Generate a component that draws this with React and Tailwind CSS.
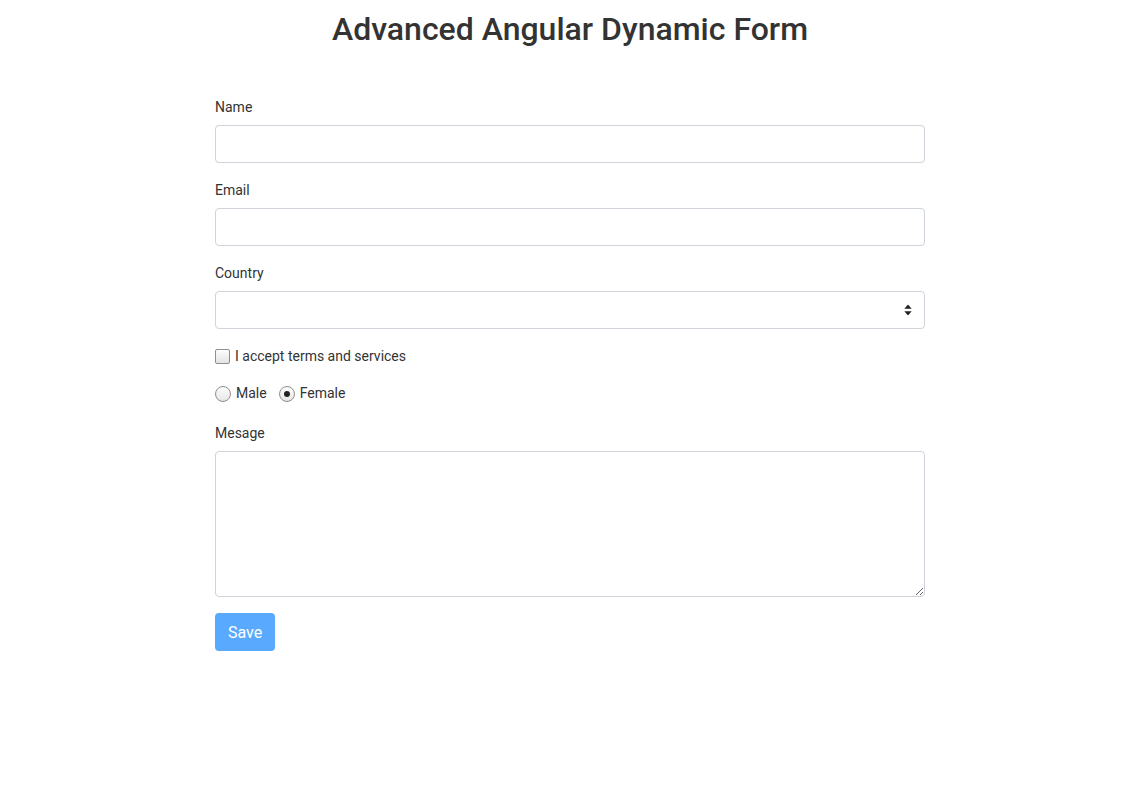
import { useState } from 'react'

const inputCls =
  'block w-full h-[38px] rounded-[4px] border border-[#ced4da] bg-white px-3 text-base text-[#495057] outline-none'

function Field({ label, children }) {
  return (
    <div className="mb-4">
      <label className="mb-[7px] block pt-[1px] text-sm leading-[21px]">{label}</label>
      {children}
    </div>
  )
}

function Radio({ checked, onChange, children }) {
  return (
    <label className="flex items-center">
      <span
        onClick={onChange}
        className="mr-[5px] flex h-[16px] w-[16px] items-center justify-center rounded-full border border-[#8f8f8f] bg-gradient-to-b from-[#fdfdfd] to-[#e6e6e6]"
      >
        {checked && <span className="h-[6px] w-[6px] rounded-full bg-[#222]" />}
      </span>
      {children}
    </label>
  )
}

export default function App() {
  const [gender, setGender] = useState('female')
  const [accepted, setAccepted] = useState(false)

  return (
    <div className="min-h-screen bg-white text-[#333] font-['Roboto',sans-serif]">
      <h2 className="mt-[10px] text-center text-[32px] font-medium leading-[38.4px]">
        Advanced Angular Dynamic Form
      </h2>

      <form className="mx-auto mt-[48px] w-[710px]" onSubmit={(e) => e.preventDefault()}>
        <Field label="Name">
          <input type="text" className={inputCls} />
        </Field>

        <Field label="Email">
          <input type="email" className={inputCls} />
        </Field>

        <Field label="Country">
          <div className="relative">
            <select className={`${inputCls} appearance-none`} defaultValue="">
              <option value="" />
            </select>
            <svg
              viewBox="0 0 8 12"
              className="pointer-events-none absolute right-[13px] top-1/2 h-[11px] w-[8px] -translate-y-1/2"
              fill="#222"
            >
              <path d="M4 0L8 4.6H0z" />
              <path d="M4 12L0 7.4H8z" />
            </svg>
          </div>
        </Field>

        <div className="mb-4 flex items-center pt-[1px] text-sm leading-[21px]">
          <span
            onClick={() => setAccepted((a) => !a)}
            className="mr-[5px] flex h-[15px] w-[15px] items-center justify-center rounded-[2px] border border-[#8f8f8f] bg-gradient-to-b from-[#fcfcfc] to-[#e4e4e4]"
          >
            {accepted && (
              <svg viewBox="0 0 12 12" className="h-[11px] w-[11px]" fill="none" stroke="#222" strokeWidth="2">
                <path d="M2 6l3 3 5-6" />
              </svg>
            )}
          </span>
          <span>I accept terms and services</span>
        </div>

        <div className="mb-[18px] flex items-center text-sm leading-[21px]">
          <div className="mr-[12px]">
            <Radio checked={gender === 'male'} onChange={() => setGender('male')}>
              Male
            </Radio>
          </div>
          <Radio checked={gender === 'female'} onChange={() => setGender('female')}>
            Female
          </Radio>
        </div>

        <Field label="Mesage">
          <textarea className="block h-[146px] w-full rounded-[4px] border border-[#ced4da] bg-white px-3 py-1.5 text-base outline-none" />
        </Field>

        <button
          type="submit"
          disabled
          className="h-[38px] rounded-[4px] bg-[#59aaff] px-[13px] pt-[2px] text-base text-white"
        >
          Save
        </button>
      </form>
    </div>
  )
}
